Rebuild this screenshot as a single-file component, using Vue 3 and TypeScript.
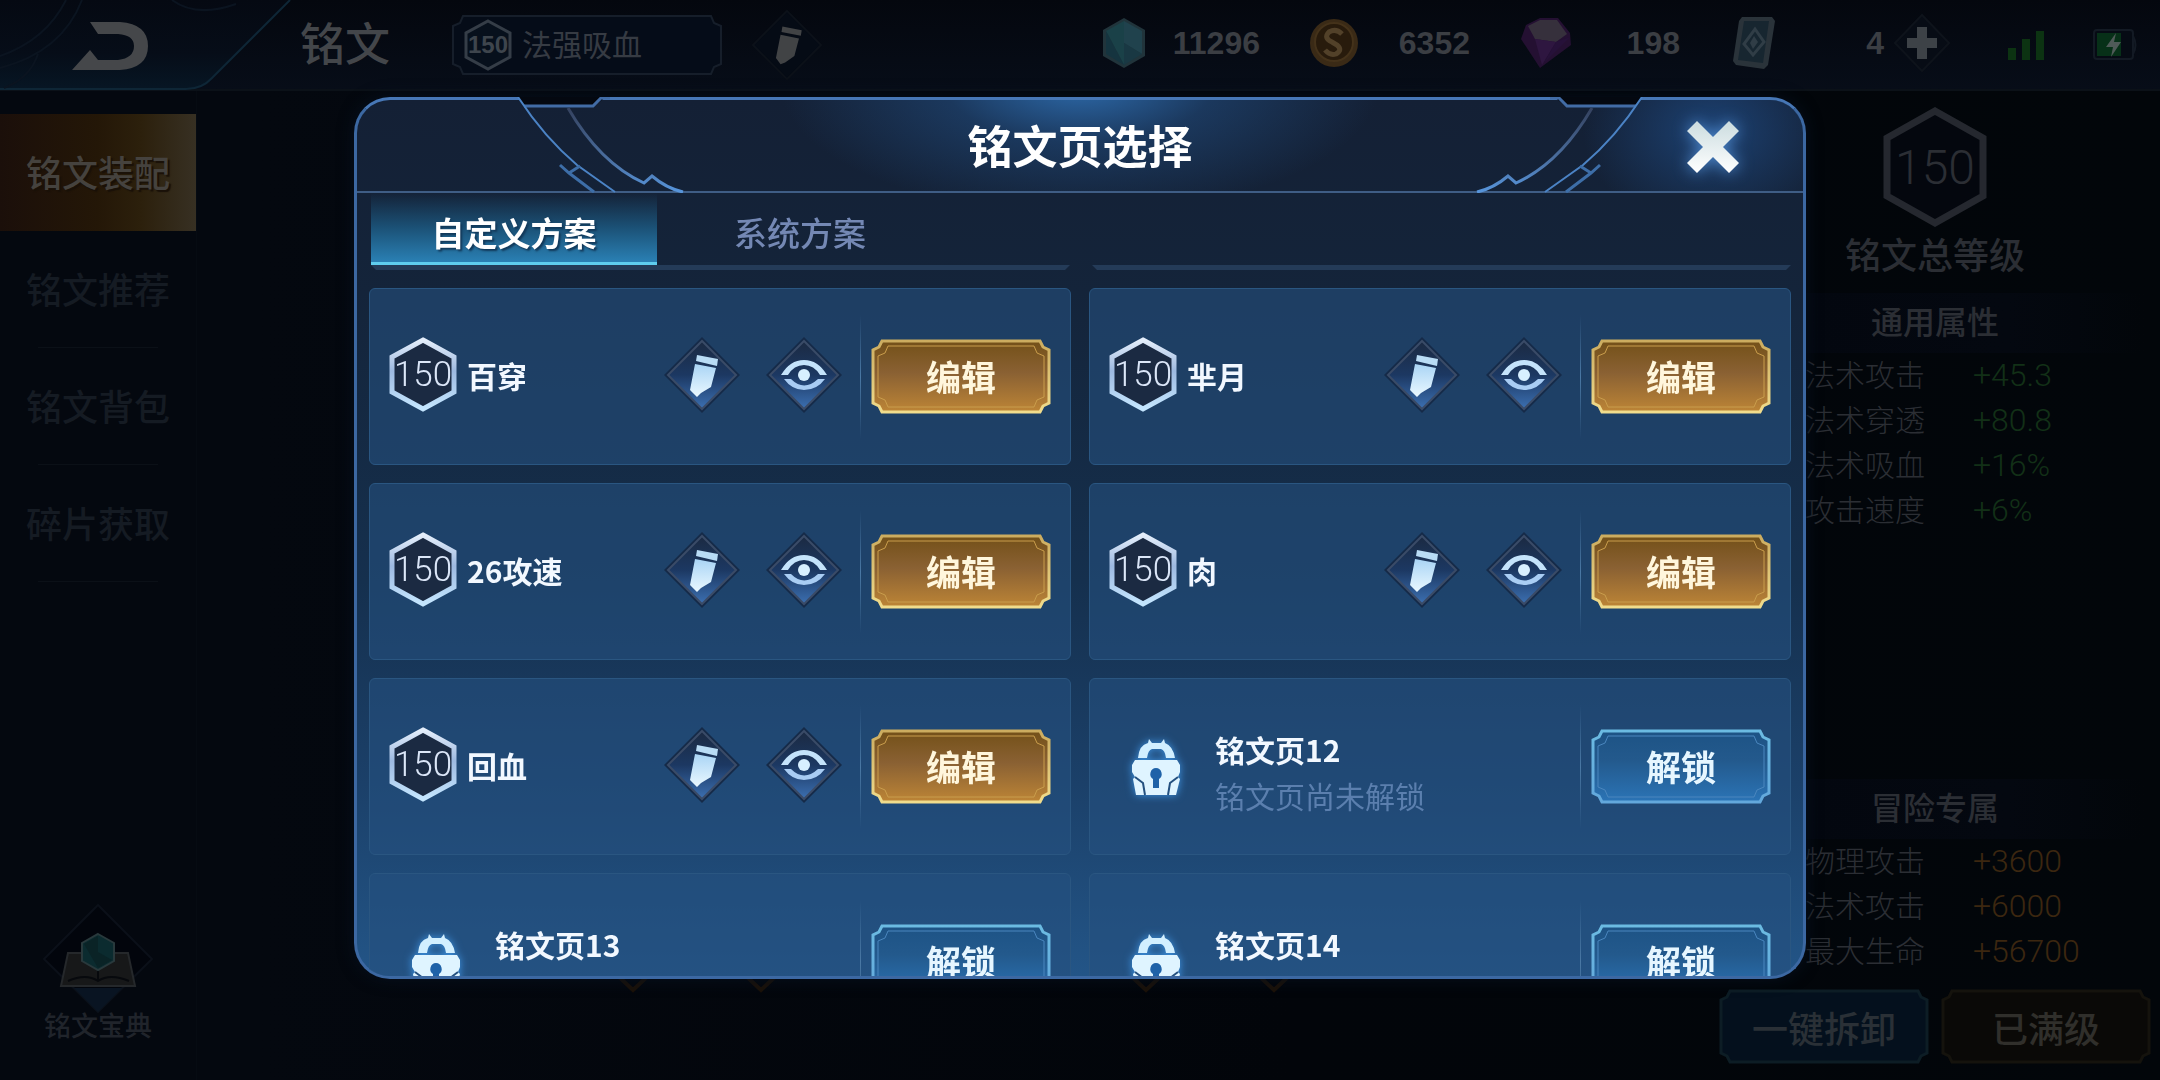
<script setup lang="ts">
import { ref } from 'vue'

interface RunePage {
  name: string
  locked: boolean
}

interface Stat {
  label: string
  value: string
}

const pages: RunePage[] = [
  { name: '百穿', locked: false },
  { name: '芈月', locked: false },
  { name: '26攻速', locked: false },
  { name: '肉', locked: false },
  { name: '回血', locked: false },
  { name: '铭文页12', locked: true },
  { name: '铭文页13', locked: true },
  { name: '铭文页14', locked: true },
]

const menu = ['铭文装配', '铭文推荐', '铭文背包', '碎片获取']
const activeMenu = ref('铭文装配')

const tabs = ['自定义方案', '系统方案']
const activeTab = ref('自定义方案')

const commonStats: Stat[] = [
  { label: '法术攻击', value: '+45.3' },
  { label: '法术穿透', value: '+80.8' },
  { label: '法术吸血', value: '+16%' },
  { label: '攻击速度', value: '+6%' },
]

const adventureStats: Stat[] = [
  { label: '物理攻击', value: '+3600' },
  { label: '法术攻击', value: '+6000' },
  { label: '最大生命', value: '+56700' },
]

// Outline of a plate whose four corners are bitten inwards
function plate(w: number, h: number, inset: number, notch: number): string {
  const l = inset
  const r = w - inset
  const t = inset
  const b = h - inset
  const n = notch
  const k = Math.round(n / 3)
  return [
    `M${l + n} ${t}H${r - n}`,
    `L${r - n + k} ${t + n - k}L${r} ${t + n}`,
    `V${b - n}`,
    `L${r - n + k} ${b - n + k}L${r - n} ${b}`,
    `H${l + n}`,
    `L${l + n - k} ${b - n + k}L${l} ${b - n}`,
    `V${t + n}`,
    `L${l + n - k} ${t + n - k}Z`,
  ].join('')
}
</script>

<template>
  <div class="screen">
    <svg class="defs" width="0" height="0" aria-hidden="true">
      <defs>
        <linearGradient id="goldFill" x1="0" y1="0" x2="0" y2="1">
          <stop offset="0" stop-color="#735018" />
          <stop offset="0.45" stop-color="#8a6133" />
          <stop offset="1" stop-color="#bd8536" />
        </linearGradient>
        <linearGradient id="goldEdge" x1="0" y1="0" x2="0" y2="1">
          <stop offset="0" stop-color="#ccac5f" />
          <stop offset="1" stop-color="#f0dc8c" />
        </linearGradient>
        <linearGradient id="blueFill" x1="0" y1="0" x2="0" y2="1">
          <stop offset="0" stop-color="#1d5385" />
          <stop offset="0.4" stop-color="#23598c" />
          <stop offset="1" stop-color="#2b74b6" />
        </linearGradient>
        <linearGradient id="blueEdge" x1="0" y1="0" x2="0" y2="1">
          <stop offset="0" stop-color="#6bbbe2" />
          <stop offset="1" stop-color="#63a8dc" />
        </linearGradient>
        <linearGradient id="hexEdge" x1="0" y1="0" x2="0" y2="1">
          <stop offset="0" stop-color="#e4eefb" />
          <stop offset="0.45" stop-color="#9db9e0" />
          <stop offset="1" stop-color="#c4e6ff" />
        </linearGradient>
        <linearGradient id="diamondFill" x1="0" y1="0" x2="0" y2="1">
          <stop offset="0" stop-color="#1b2a42" />
          <stop offset="0.5" stop-color="#1c3862" />
          <stop offset="1" stop-color="#3c70b2" />
        </linearGradient>
        <linearGradient id="iconFill" x1="0" y1="0" x2="0" y2="1">
          <stop offset="0" stop-color="#a9d4f5" />
          <stop offset="1" stop-color="#eaf8ff" />
        </linearGradient>
        <linearGradient id="closeFill" x1="0" y1="0" x2="0" y2="1">
          <stop offset="0" stop-color="#cbdcdf" />
          <stop offset="1" stop-color="#ffffff" />
        </linearGradient>
        <linearGradient id="backFill" x1="0" y1="0" x2="0" y2="1">
          <stop offset="0" stop-color="#050912" />
          <stop offset="0.6" stop-color="#060d18" />
          <stop offset="1" stop-color="#071624" />
        </linearGradient>
        <linearGradient id="curveFade" x1="0" y1="0" x2="0" y2="1">
          <stop offset="0" stop-color="#35425f" />
          <stop offset="0.6" stop-color="#4a6e9f" />
          <stop offset="1" stop-color="#5795dc" />
        </linearGradient>
      </defs>
    </svg>

    <header class="top">
      <button class="back" type="button" aria-label="返回">
        <svg width="292" height="90" viewBox="0 0 292 90">
          <path d="M0 0H290L212 78Q202 89 186 89H0Z" fill="url(#backFill)" />
          <path d="M290 0L212 78Q202 89 186 89H0" fill="none" stroke="#0e2636" stroke-width="2" />
          <g fill="none" stroke="#0b1420" stroke-width="2">
            <path d="M0 56Q46 40 66 0M0 68Q62 52 82 0M4 88Q30 78 38 54M172 0Q196 18 236 4" />
          </g>
          <path d="M90 22H120Q148 24 148 46Q148 68 120 70H72L90 50L98 60H118Q134 58 134 46Q134 35 118 34H98Z" fill="#45474a" />
        </svg>
      </button>
      <h1 class="page-name">铭文</h1>
      <button class="current" type="button">
        <svg class="current-frame" width="270" height="60" viewBox="0 0 270 60">
          <path :d="plate(270, 60, 1, 10)" fill="#050c18" stroke="#161e2a" stroke-width="2" />
        </svg>
        <span class="mini-hex">
          <svg width="48" height="52" viewBox="0 0 48 52">
            <path d="M24 2L46 14V38L24 50L2 38V14Z" fill="#07101c" stroke="#353d47" stroke-width="3" />
          </svg>
          <b>150</b>
        </span>
        <span class="current-name">法强吸血</span>
      </button>
      <button class="rename" type="button" aria-label="重命名">
        <svg width="70" height="72" viewBox="0 0 76 76">
          <path d="M38 1L75 38L38 75L1 38Z" fill="#050b15" stroke="#0c1119" stroke-width="2" />
          <path d="M33 18L54 22L53 28L32 24ZM31 27L51 31L46 50L36 57L31 59L26 52Z" fill="#414345" />
        </svg>
      </button>

      <div class="wallet">
        <div class="coin">
          <svg width="48" height="52" viewBox="0 0 48 52">
            <path d="M24 1L45 13V39L24 51L3 39V13Z" fill="#21343b" />
            <path d="M24 4V26L42 37V14Z" fill="#20424d" />
            <path d="M24 4L6 14L24 48Z" fill="#1a4148" />
            <path d="M6 14V37L24 48Z" fill="#15343f" />
            <path d="M24 26V48L42 37Z" fill="#193843" />
          </svg>
          <span>11296</span>
        </div>
        <div class="coin">
          <svg width="48" height="52" viewBox="0 0 48 52">
            <circle cx="24" cy="26" r="24" fill="#3a2a16" />
            <circle cx="24" cy="25" r="19" fill="#281b0c" stroke="#44321a" stroke-width="2" />
            <path d="M32 17Q26 11 19 15Q13 21 22 25L27 28Q33 33 26 37Q20 39 15 33" fill="none" stroke="#524129" stroke-width="5" />
          </svg>
          <span>6352</span>
        </div>
        <div class="coin">
          <svg width="52" height="52" viewBox="0 0 52 52">
            <path d="M6 8L20 1H38L50 16L51 28L20 51L1 22Z" fill="#241032" />
            <path d="M8 9L20 3H37L47 17L36 25L15 22Z" fill="#36303c" />
            <path d="M15 22L36 25L22 48Z" fill="#2e1640" />
            <path d="M36 25L50 20L24 46Z" fill="#261139" />
          </svg>
          <span>198</span>
        </div>
        <div class="coin last">
          <svg width="48" height="52" viewBox="0 0 48 52">
            <path d="M12 0H42L45 4L38 48L34 52L6 48L3 44L9 4Z" fill="#2a333a" />
            <path d="M14 4H39L33 46L8 43Z" fill="#172630" />
            <path d="M25 12L34 25L23 38L14 27Z" fill="none" stroke="#303d46" stroke-width="3" />
            <path d="M24 19L28 25L23 32L20 26Z" fill="#303d46" />
          </svg>
          <span>4</span>
        </div>
        <button class="plus" type="button" aria-label="增加">
          <svg width="56" height="64" viewBox="0 0 56 64">
            <path d="M28 4L55 32L28 60L1 32Z" fill="#070c15" stroke="#0e131b" stroke-width="2" />
            <path d="M23 16H33V27H43V37H33V48H23V37H13V27H23Z" fill="#3d4247" />
          </svg>
        </button>
      </div>
      <svg class="signal" width="38" height="30" viewBox="0 0 38 30">
        <path d="M1 18H9V30H1ZM15 9H23V30H15ZM29 1H37V30H29Z" fill="#0c3312" />
      </svg>
      <svg class="battery" width="45" height="32" viewBox="0 0 45 32">
        <rect x="1" y="1" width="39" height="29" rx="3" fill="#060b14" stroke="#131a24" stroke-width="2" />
        <path d="M40 7Q45 16 40 25" fill="none" stroke="#131a24" stroke-width="2" />
        <rect x="4" y="4" width="24" height="23" fill="#073018" />
        <path d="M23 4L13 18H20L18 28L28 13H21Z" fill="#4f5a58" />
      </svg>
    </header>

    <div class="body">
      <nav class="side">
        <button
          v-for="item in menu"
          :key="item"
          type="button"
          :class="['side-item', { on: item === activeMenu }]"
          @click="activeMenu = item"
        >
          {{ item }}
        </button>
        <button class="codex" type="button">
          <svg width="112" height="110" viewBox="0 0 112 110">
            <path d="M56 2L110 56L56 109L2 56Z" fill="#02050c" stroke="#0b1019" stroke-width="2" />
            <path d="M32 85H80L56 109Z" fill="#091422" />
            <path d="M26 50H86L93 83H19Z" fill="#171819" stroke="#25282b" stroke-width="2" />
            <path d="M26 78Q44 70 56 78Q68 70 87 78M56 64V78" fill="none" stroke="#07090d" stroke-width="2" />
            <path d="M56 31L72 40V58L56 67L40 58V40Z" fill="#0b2b2f" stroke="#29393c" stroke-width="2" />
            <path d="M56 33V49L70 57L56 65L42 41Z" fill="#0a2326" />
          </svg>
          <span>铭文宝典</span>
        </button>
      </nav>

      <div class="board">
        <svg class="tips" width="694" height="60" viewBox="0 0 694 60" aria-hidden="true">
          <path d="M66 45L81 59L96 45M194 45L209 59L224 45M579 45L594 59L609 45M707 45L722 59L737 45" fill="none" stroke="#1c1208" stroke-width="4" />
        </svg>
      </div>

      <aside class="stats">
        <div class="stats-body">
          <div class="total">
            <svg width="104" height="120" viewBox="0 0 104 120">
              <path d="M52 4L100 31V89L52 116L4 89V31Z" fill="#04070e" stroke="#25282f" stroke-width="7" />
            </svg>
            <span>150</span>
          </div>
          <p class="total-label">铭文总等级</p>
          <h2 class="band">通用属性</h2>
          <dl class="rows green">
            <div v-for="s in commonStats" :key="s.label">
              <dt>{{ s.label }}</dt>
              <dd>{{ s.value }}</dd>
            </div>
          </dl>
          <h2 class="band second">冒险专属</h2>
          <dl class="rows amber">
            <div v-for="s in adventureStats" :key="s.label">
              <dt>{{ s.label }}</dt>
              <dd>{{ s.value }}</dd>
            </div>
          </dl>
        </div>
        <div class="stats-actions">
          <button class="wide" type="button">
            <svg width="210" height="75" viewBox="0 0 210 75">
              <path :d="plate(210, 75, 2, 9)" fill="#04101d" stroke="#0d1d25" stroke-width="3" />
            </svg>
            <span>一键拆卸</span>
          </button>
          <button class="wide dull" type="button">
            <svg width="210" height="75" viewBox="0 0 210 75">
              <path :d="plate(210, 75, 2, 9)" fill="#0a0907" stroke="#15130d" stroke-width="3" />
            </svg>
            <span>已满级</span>
          </button>
        </div>
      </aside>
    </div>

    <div class="overlay">
      <section class="dialog" role="dialog" aria-labelledby="dialog-title">
        <div class="dialog-head">
          <svg v-for="edge in ['left', 'right']" :key="edge" :class="['trim', edge]" width="340" height="96" viewBox="0 0 340 96" aria-hidden="true">
            <path d="M164 0H252L240 9H170Z" fill="#040810" />
            <path d="M170 9H239L247 1H256" fill="none" stroke="#426ca6" stroke-width="3" />
            <path d="M214 11Q246 66 290 86L298 79Q312 91 329 95" fill="none" stroke="url(#curveFade)" stroke-width="3" />
            <path d="M164 0Q190 40 223 68L261 95" fill="none" stroke="#4b83c5" stroke-width="2" />
            <path d="M226 69L215 76M206 68L215 76L240 95" fill="none" stroke="#3d6ea8" stroke-width="3" />
          </svg>
          <h2 id="dialog-title">铭文页选择</h2>
          <button class="close" type="button" aria-label="关闭">
            <svg width="52" height="52" viewBox="0 0 52 52">
              <path d="M10 0L26 16L42 0L52 10L36 26L52 42L42 52L26 36L10 52L0 42L16 26L0 10Z" fill="url(#closeFill)" />
            </svg>
          </button>
        </div>

        <div class="tabs" role="tablist">
          <button
            v-for="tab in tabs"
            :key="tab"
            type="button"
            role="tab"
            :aria-selected="tab === activeTab"
            :class="['tab', { on: tab === activeTab }]"
            @click="activeTab = tab"
          >
            {{ tab }}
          </button>
        </div>
        <div class="rails"><i></i><i></i></div>

        <div class="list">
          <article v-for="page in pages" :key="page.name" class="card">
            <template v-if="!page.locked">
              <div class="hex">
                <svg width="68" height="75" viewBox="0 0 68 75">
                  <path d="M34 3L65 20V55L34 72L3 55V20Z" fill="#1b2a42" stroke="url(#hexEdge)" stroke-width="5" />
                </svg>
                <span>150</span>
              </div>
              <h3 class="name">{{ page.name }}</h3>
              <button class="glyph" type="button" aria-label="重命名">
                <svg width="76" height="76" viewBox="0 0 76 76">
                  <path d="M38 0L76 38L38 76L0 38Z" fill="#152a48" />
                  <path d="M38 4L72 38L38 72L4 38Z" fill="url(#diamondFill)" stroke="#3a4b67" stroke-width="2" />
                  <path d="M33 18L54 22L53 29L32 24Z" fill="#b9dcf5" />
                  <path d="M31 27L52 31L47 50L37 56L33 60L26 53Z" fill="url(#iconFill)" />
                </svg>
              </button>
              <button class="glyph" type="button" aria-label="预览">
                <svg width="76" height="76" viewBox="0 0 76 76">
                  <path d="M38 0L76 38L38 76L0 38Z" fill="#152a48" />
                  <path d="M38 4L72 38L38 72L4 38Z" fill="url(#diamondFill)" stroke="#3a4b67" stroke-width="2" />
                  <path d="M15 38Q24 23 38 23Q52 23 61 38H54Q48 28 38 28Q28 28 22 38Z" fill="#c4e3fb" />
                  <path d="M18 42H25Q38 55 52 42H59Q51 53 38 53Q26 53 18 42Z" fill="#a9cdf4" />
                  <circle cx="38" cy="38" r="6" fill="#d8f0ff" />
                </svg>
              </button>
            </template>
            <template v-else>
              <svg class="lock" width="48" height="58" viewBox="0 0 48 58">
                <path d="M6 20Q7 7 16 5L17 1L20 5H29L32 1L33 5Q41 8 43 20H34Q33 12 29 11H20Q16 12 15 20Z" fill="#d2efff" />
                <path d="M3 22H45L48 27V34L46 39L48 41L44 57H4L1 41L3 39L0 34V27Z" fill="#dff4ff" />
                <path d="M3 39L11 45L13 57M46 39L38 45L36 57" fill="none" stroke="#24507f" stroke-width="2" />
                <path d="M24 30A6 6 0 0 1 27 41V50H21V41A6 6 0 0 1 24 30Z" fill="#1f62a8" />
              </svg>
              <div class="name locked">
                <h3>{{ page.name }}</h3>
                <p>铭文页尚未解锁</p>
              </div>
            </template>
            <span class="rule"></span>
            <button class="action" type="button">
              <svg width="180" height="75" viewBox="0 0 180 75">
                <path
                  :d="plate(180, 75, 2, 9)"
                  :fill="page.locked ? 'url(#blueFill)' : 'url(#goldFill)'"
                  :stroke="page.locked ? 'url(#blueEdge)' : 'url(#goldEdge)'"
                  stroke-width="3"
                />
                <path
                  :d="plate(180, 75, 7, 10)"
                  fill="none"
                  :stroke="page.locked ? '#4a86be' : '#c99d4c'"
                  stroke-width="1"
                />
              </svg>
              <span>{{ page.locked ? '解锁' : '编辑' }}</span>
            </button>
          </article>
        </div>
      </section>
    </div>
  </div>
</template>

<style>
body {
  background: #03060c;
}
</style>

<style scoped>
* {
  box-sizing: border-box;
  margin: 0;
}

button {
  padding: 0;
  border: 0;
  background: none;
  font: inherit;
  color: inherit;
  cursor: pointer;
}

svg {
  display: block;
}

.screen {
  display: flex;
  flex-direction: column;
  height: 100vh;
  overflow: hidden;
  background: linear-gradient(90deg, #04080f 0, #04080f 12%, #02050a 60%, #02060a 100%);
  font-family: 'Liberation Sans', 'Noto Sans CJK SC', sans-serif;
  color: #2b2e34;
}

.defs {
  position: absolute;
}

/* Header */
.top {
  display: flex;
  align-items: center;
  height: 91px;
  flex: none;
  padding-right: 22px;
  border-bottom: 2px solid #0b1118;
  background: linear-gradient(#04070e, #070d18);
}

.page-name {
  margin-left: 8px;
  width: 152px;
  padding-top: 3px;
  font-size: 45px;
  line-height: 60px;
  font-weight: 500;
  color: #43464a;
}

.current {
  position: relative;
  display: flex;
  align-items: center;
  width: 270px;
  height: 60px;
  padding-left: 12px;
  gap: 10px;
}

.current-frame {
  position: absolute;
  inset: 0;
}

.mini-hex,
.hex,
.total {
  position: relative;
  display: flex;
  align-items: center;
  justify-content: center;
}

.mini-hex b,
.hex span,
.total span {
  position: absolute;
}

.mini-hex b {
  font-size: 24px;
  color: #3e454d;
}

.current-name {
  position: relative;
  padding-top: 3px;
  font-size: 30px;
  line-height: 40px;
  color: #363b43;
}

.rename {
  margin-left: 30px;
}

.wallet {
  display: flex;
  align-items: center;
  gap: 50px;
  margin-left: auto;
  height: 84px;
  padding-bottom: 3px;
}

.coin {
  display: flex;
  align-items: center;
  justify-content: space-between;
  width: 160px;
  font-size: 32px;
  font-weight: 700;
  color: #3b3e43;
}

.coin.last {
  width: 154px;
}

.plus {
  margin-left: -40px;
}

.signal {
  margin-left: 57px;
}

.battery {
  margin-left: 48px;
}

/* Body */
.body {
  display: flex;
  flex: 1;
  min-height: 0;
}

.side {
  display: flex;
  flex-direction: column;
  width: 197px;
  padding: 23px 0 39px;
  border-right: 1px solid #060b12;
}

.side-item {
  display: flex;
  flex-direction: column;
  align-items: center;
  justify-content: flex-end;
  height: 117px;
  gap: 29px;
  font-size: 36px;
  line-height: 52px;
  font-weight: 500;
  color: #151b23;
}

.side-item::after {
  content: '';
  width: 120px;
  height: 1px;
  background: #0b1017;
}

.side-item.on {
  background: linear-gradient(90deg, #1b0f0a 0, #241707 50%, #2c200c 72%, #373023 100%);
  color: #45423e;
  text-shadow: 2px 2px 1px #1a1108;
}

.side-item.on::after {
  background: none;
}

.codex {
  display: flex;
  flex-direction: column;
  align-items: center;
  margin-top: auto;
  font-size: 27px;
  line-height: 28px;
  font-weight: 500;
  color: #20242b;
}

.board {
  flex: 1;
  display: flex;
  align-items: flex-end;
  padding: 0 0 89px 355px;
}

.tips {
  overflow: visible;
}

.stats {
  display: flex;
  flex-direction: column;
  width: 460px;
  padding-bottom: 16px;
}

.stats-body {
  display: flex;
  flex-direction: column;
  flex: 1;
  margin-left: 105px;
  padding-top: 16px;
}

.total {
  width: 260px;
}

.total span {
  font-family: Roboto, 'Liberation Sans', sans-serif;
  font-size: 48px;
  font-weight: 300;
  color: #2b2e34;
}

.total-label {
  width: 260px;
  padding: 5px 0 11px;
  text-align: center;
  font-size: 36px;
  line-height: 50px;
  font-weight: 500;
}

.band {
  width: 340px;
  padding-right: 80px;
  background: linear-gradient(90deg, #03070f, #040810 60%, #02060a);
  text-align: center;
  font-size: 32px;
  line-height: 60px;
  font-weight: 500;
}

.band.second {
  margin-top: auto;
}

.rows div {
  display: flex;
  font-size: 30px;
  line-height: 45px;
  font-weight: 300;
}

.rows dt {
  width: 168px;
}

.rows dd {
  font-family: Roboto, 'Liberation Sans', sans-serif;
  font-size: 32px;
}

.green dd {
  color: #123017;
}

.amber dd {
  color: #3c2710;
}

.stats-actions {
  display: flex;
  justify-content: flex-end;
  gap: 12px;
  padding: 15px 9px 0 0;
}

.wide,
.action {
  position: relative;
  display: flex;
  align-items: center;
  justify-content: center;
  height: 75px;
}

.wide {
  width: 210px;
  font-size: 36px;
  font-weight: 500;
  color: #2a3036;
}

.wide.dull {
  color: #302f2b;
}

.wide svg,
.action svg {
  position: absolute;
  inset: 0;
}

.wide span,
.action span {
  position: relative;
}

/* Dialog */
.overlay {
  position: fixed;
  inset: 0;
  display: flex;
  padding: 97px 354px 101px;
}

.dialog {
  display: flex;
  flex-direction: column;
  flex: 1;
  min-width: 0;
  border: 3px solid #3c68a2;
  border-top-color: #4777b6;
  border-radius: 36px;
  background: linear-gradient(#142035 0, #14243a 22%, #15304e 55%, #1b4069 78%, #235587 100%);
  box-shadow: 0 0 16px #06101e;
}

.dialog-head {
  position: relative;
  display: flex;
  align-items: center;
  justify-content: center;
  height: 93px;
  flex: none;
  border-bottom: 2px solid #3f5d85;
  border-radius: 32px 32px 0 0;
  background:
    radial-gradient(300px 130px at 50% -16px, #2d6bac 0, #22508580 45%, #14203500 100%),
    radial-gradient(130px 100px at calc(100% - 90px) 30px, #1c4172 0, #14203500 100%);
}

.dialog-head h2 {
  padding-top: 6px;
  font-size: 45px;
  line-height: 60px;
  font-weight: 700;
  color: #ffffff;
}

.trim {
  position: absolute;
  top: -3px;
}

.trim.left {
  left: -3px;
}

.trim.right {
  right: -3px;
  transform: scaleX(-1);
}

.close {
  position: absolute;
  top: 21px;
  right: 64px;
  filter: drop-shadow(0 0 8px #4f8ad0);
}

.tabs {
  display: flex;
  height: 72px;
  flex: none;
  padding: 0 14px;
}

.tab {
  width: 286px;
  padding-top: 14px;
  border-bottom: 3px solid transparent;
  font-size: 33px;
  line-height: 54px;
  font-weight: 500;
  color: #7488b4;
}

.tab.on {
  border-bottom-color: #5fcdee;
  background: linear-gradient(#16273e00, #1b5176 50%, #2a80b4 100%);
  font-weight: 700;
  color: #ffffff;
  text-shadow: 2px 2px 2px #12395a;
}

.rails {
  display: flex;
  gap: 22px;
  padding: 0 12px 0 14px;
}

.rails i {
  flex: 1;
  height: 5px;
  background: #243b58;
  clip-path: polygon(0 0, 100% 0, calc(100% - 5px) 100%, 5px 100%);
}

.list {
  display: grid;
  grid-template-columns: 1fr 1fr;
  grid-auto-rows: 177px;
  gap: 18px;
  flex: 1;
  min-height: 0;
  margin-top: 18px;
  padding: 0 12px;
  overflow-y: auto;
  scrollbar-width: none;
  border-radius: 0 0 32px 32px;
}

.card {
  display: flex;
  align-items: center;
  padding: 0 19px;
  border: 1px solid #2a5681;
  border-radius: 6px;
  background: #24507e99;
  min-width: 0;
}

.hex,
.glyph {
  margin-bottom: 4px;
}

.hex span {
  font-family: Roboto, 'Liberation Sans', sans-serif;
  font-size: 35px;
  font-weight: 300;
  color: #dbe6f8;
}

.name {
  flex: 1;
  min-width: 0;
  margin-left: 10px;
  padding-bottom: 4px;
  font-family: 'Noto Sans CJK SC', sans-serif;
  font-size: 30px;
  line-height: 44px;
  font-weight: 700;
  color: #f2f8ff;
  white-space: nowrap;
}

.glyph {
  margin-right: 26px;
}

.lock {
  margin-left: 23px;
  filter: drop-shadow(0 0 4px #3f96e6);
}

.name.locked {
  margin-left: 35px;
  padding: 10px 0 0;
}

.locked h3 {
  font-size: 30px;
  line-height: 46px;
  font-weight: 700;
}

.locked p {
  font-size: 30px;
  line-height: 46px;
  font-weight: 400;
  color: #5b7fae;
}

.rule {
  width: 1px;
  height: 124px;
  margin: 0 10px 0 -8px;
  background: linear-gradient(#4a78a400, #4a78a4 50%, #4a78a400);
}

.action {
  width: 180px;
  padding-bottom: 2px;
  font-size: 35px;
  font-weight: 700;
  color: #fff6dc;
}

.locked ~ .action {
  color: #e6f6ff;
}
</style>
